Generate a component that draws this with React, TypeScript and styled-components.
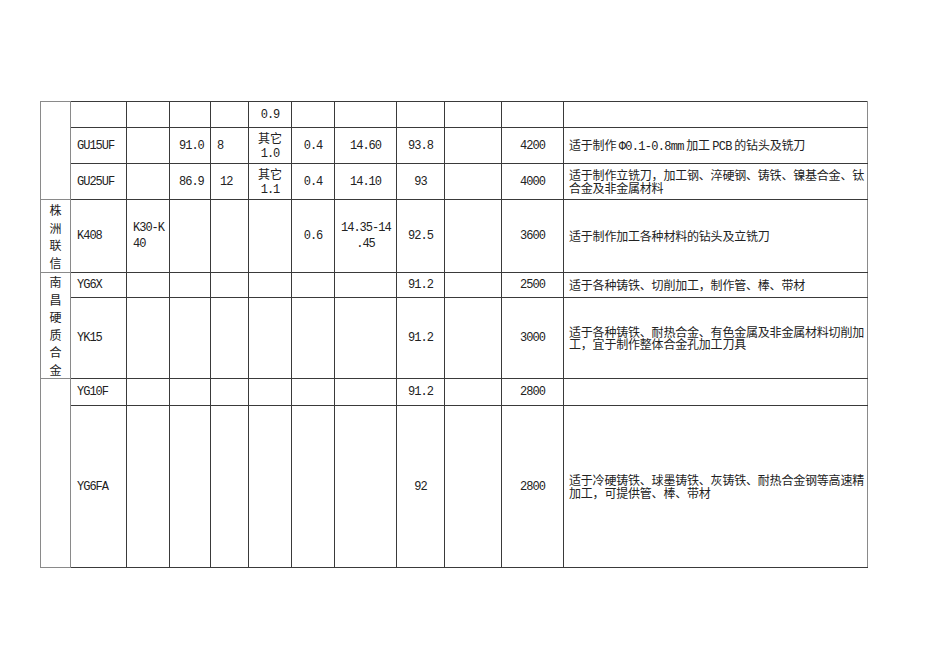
import styled, { createGlobalStyle } from 'styled-components'

const GlobalStyle = createGlobalStyle`
  html, body {
    margin: 0;
    padding: 0;
    background: #ffffff;
  }
`

const Page = styled.div`
  width: 950px;
  height: 672px;
  box-sizing: border-box;
  padding: 101px 0 0 40px;
  background: #ffffff;
`

const Table = styled.table`
  border-collapse: collapse;
  table-layout: fixed;
  width: 828px;
  border: 1px solid #8a8a8a;
  color: #222222;
`

const Row = styled.tr<{ $h: number }>`
  height: ${(p) => p.$h}px;
`

const Cell = styled.td<{ $align?: 'left' | 'center'; $indent?: number }>`
  border: 1px solid #3a3a3a;
  padding: 0 6px 0 ${(p) => 6 + (p.$indent ?? 0)}px;
  text-align: ${(p) => p.$align ?? 'left'};
  vertical-align: middle;
  font-family: 'Liberation Mono', monospace;
  font-size: 12px;
  letter-spacing: -1px;
  line-height: 16px;
  white-space: nowrap;
  overflow: hidden;
`

const Company = styled(Cell)`
  padding: 0 3px;
  text-align: center;
  white-space: normal;
  font-family: 'Noto Sans CJK SC', sans-serif;
  letter-spacing: 0;
  line-height: 17.5px;
  border-color: #8a8a8a;
`

const Desc = styled(Cell)`
  padding: 0 5px 0 5px;
  font-family: 'Noto Sans CJK SC', sans-serif;
  letter-spacing: -0.2px;
  line-height: 12.5px;
  border-right-color: #8a8a8a;
`

const DescLine = styled.div<{ $full?: boolean }>`
  text-align: ${(p) => (p.$full ? 'justify' : 'left')};
  text-align-last: ${(p) => (p.$full ? 'justify' : 'left')};
`

const Line = styled.div<{ $zh?: boolean }>`
  font-family: ${(p) => (p.$zh ? "'Noto Sans CJK SC', sans-serif" : "'Liberation Mono', monospace")};
  letter-spacing: ${(p) => (p.$zh ? '0' : '-1px')};
  line-height: 16px;
`

const Lt = styled.span`
  font-family: 'Liberation Mono', monospace;
  font-size: 12px;
  letter-spacing: -0.7px;
  line-height: 1;
`

const widths = [30, 56, 43, 41, 38, 43, 43, 62, 48, 57, 62, 304]

function Other({ value }: { value: string }) {
  return (
    <>
      <Line $zh>其它</Line>
      <Line>{value}</Line>
    </>
  )
}

function Blanks({ n }: { n: number }) {
  return (
    <>
      {Array.from({ length: n }, (_, i) => (
        <Cell key={i} />
      ))}
    </>
  )
}

function Text({ lines }: { lines: string[] }) {
  return (
    <>
      {lines.map((l, i) => (
        <DescLine key={i} $full={i < lines.length - 1}>
          {l}
        </DescLine>
      ))}
    </>
  )
}

export default function App() {
  return (
    <Page>
      <GlobalStyle />
      <Table>
        <colgroup>
          {widths.map((w, i) => (
            <col key={i} style={{ width: w }} />
          ))}
        </colgroup>
        <tbody>
          <Row $h={26}>
            <Company rowSpan={3} />
            <Blanks n={4} />
            <Cell $align="center">0.9</Cell>
            <Blanks n={5} />
            <Desc />
          </Row>
          <Row $h={36}>
            <Cell>GU15UF</Cell>
            <Cell />
            <Cell $indent={3}>91.0</Cell>
            <Cell>8</Cell>
            <Cell $align="center">
              <Other value="1.0" />
            </Cell>
            <Cell $align="center">0.4</Cell>
            <Cell $align="center">14.60</Cell>
            <Cell $align="center">93.8</Cell>
            <Cell />
            <Cell $align="center">4200</Cell>
            <Desc>
              <DescLine>
                适于制作 <Lt>Φ0.1-0.8mm</Lt> 加工 <Lt>PCB</Lt> 的钻头及铣刀
              </DescLine>
            </Desc>
          </Row>
          <Row $h={36}>
            <Cell>GU25UF</Cell>
            <Cell />
            <Cell $indent={3}>86.9</Cell>
            <Cell $indent={3}>12</Cell>
            <Cell $align="center">
              <Other value="1.1" />
            </Cell>
            <Cell $align="center">0.4</Cell>
            <Cell $align="center">14.10</Cell>
            <Cell $align="center">93</Cell>
            <Cell />
            <Cell $align="center">4000</Cell>
            <Desc>
              <Text lines={['适于制作立铣刀，加工钢、淬硬钢、铸铁、镍基合金、钛', '合金及非金属材料']} />
            </Desc>
          </Row>
          <Row $h={73}>
            <Company>株洲联信</Company>
            <Cell>K408</Cell>
            <Cell>
              <Line>K30-K</Line>
              <Line>40</Line>
            </Cell>
            <Blanks n={3} />
            <Cell $align="center">0.6</Cell>
            <Cell $align="center">
              <Line>14.35-14</Line>
              <Line>.45</Line>
            </Cell>
            <Cell $align="center">92.5</Cell>
            <Cell />
            <Cell $align="center">3600</Cell>
            <Desc>
              <Text lines={['适于制作加工各种材料的钻头及立铣刀']} />
            </Desc>
          </Row>
          <Row $h={25}>
            <Company rowSpan={2}>南昌硬质合金</Company>
            <Cell>YG6X</Cell>
            <Blanks n={6} />
            <Cell $align="center">91.2</Cell>
            <Cell />
            <Cell $align="center">2500</Cell>
            <Desc>
              <Text lines={['适于各种铸铁、切削加工，制作管、棒、带材']} />
            </Desc>
          </Row>
          <Row $h={81}>
            <Cell>YK15</Cell>
            <Blanks n={6} />
            <Cell $align="center">91.2</Cell>
            <Cell />
            <Cell $align="center">3000</Cell>
            <Desc>
              <Text lines={['适于各种铸铁、耐热合金、有色金属及非金属材料切削加', '工，宜于制作整体合金孔加工刀具']} />
            </Desc>
          </Row>
          <Row $h={27}>
            <Company rowSpan={2} />
            <Cell>YG10F</Cell>
            <Blanks n={6} />
            <Cell $align="center">91.2</Cell>
            <Cell />
            <Cell $align="center">2800</Cell>
            <Desc />
          </Row>
          <Row $h={162}>
            <Cell>YG6FA</Cell>
            <Blanks n={6} />
            <Cell $align="center">92</Cell>
            <Cell />
            <Cell $align="center">2800</Cell>
            <Desc>
              <Text lines={['适于冷硬铸铁、球墨铸铁、灰铸铁、耐热合金钢等高速精', '加工，可提供管、棒、带材']} />
            </Desc>
          </Row>
        </tbody>
      </Table>
    </Page>
  )
}
